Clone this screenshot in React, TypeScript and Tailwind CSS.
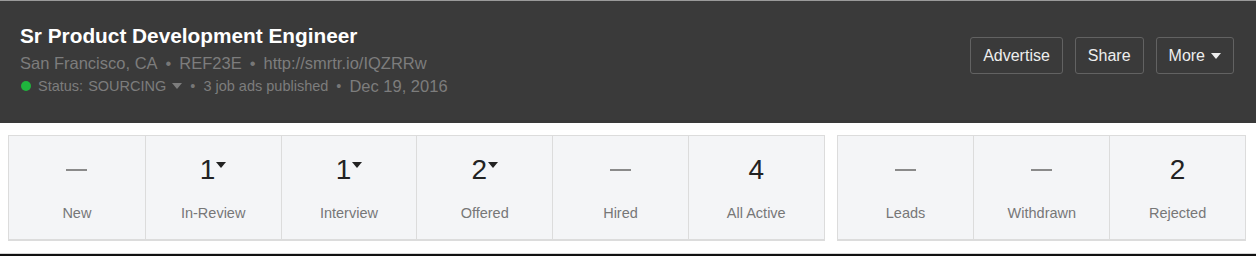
import React from 'react';

type Stat = { label: string; value?: string; caret?: boolean };

const pipeline: Stat[] = [
    { label: 'New' },
    { label: 'In-Review', value: '1', caret: true },
    { label: 'Interview', value: '1', caret: true },
    { label: 'Offered', value: '2', caret: true },
    { label: 'Hired' },
    { label: 'All Active', value: '4' },
];

const others: Stat[] = [
    { label: 'Leads' },
    { label: 'Withdrawn' },
    { label: 'Rejected', value: '2' },
];

const Caret: React.FC<{ className?: string }> = ({ className }) => (
    <svg width="10" height="6" viewBox="0 0 10 6" className={className}>
        <path d="M0 0h10L5 6z" fill="currentColor" />
    </svg>
);

const StatCell: React.FC<{ stat: Stat; first?: boolean }> = ({ stat, first }) => (
    <div className={`flex flex-col items-center pt-[20px] ${first ? '' : 'border-l border-[#dcdcdc]'}`}>
        <div className="h-[28px] flex items-center justify-center">
            {stat.value ? (
                <div className="flex items-start text-[#222] text-[28px] leading-[28px]">
                    <span>{stat.value}</span>
                    {stat.caret && <Caret className="mt-[6px] ml-[1px] text-[#222]" />}
                </div>
            ) : (
                <div className="w-[21px] h-[2px] bg-[#8a8a8a]" />
            )}
        </div>
        <div className="mt-[22px] text-[14.5px] text-[#777] leading-[14px]">{stat.label}</div>
    </div>
);

const Dot = () => <span className="mx-[8px] text-[#777]">•</span>;

export default function App() {
    return (
        <div className="w-[1256px] h-[256px] bg-white flex flex-col font-['Liberation_Sans',Arial,sans-serif]">
            <header className="h-[123px] bg-[#3a3a3a] border-t border-[#9a9a9a] flex justify-between pl-[20px] pr-[22px]">
                <div className="pt-[23px]">
                    <h1 className="text-white font-bold text-[20.8px] leading-[24px]">
                        Sr Product Development Engineer
                    </h1>
                    <div className="mt-[4px] text-[#7d7d7d] text-[16.5px] leading-[22px] flex items-center">
                        <span>San Francisco, CA</span>
                        <Dot />
                        <span>REF23E</span>
                        <Dot />
                        <span>http://smrtr.io/IQZRRw</span>
                    </div>
                    <div className="mt-[1px] flex items-center text-[#7d7d7d] text-[14.5px] leading-[22px]">
                        <span className="w-[10px] h-[10px] rounded-full bg-[#1fb53d] ml-[1px] mr-[7px]" />
                        <span>Status:</span>
                        <span className="ml-[5px]">SOURCING</span>
                        <Caret className="ml-[6px] text-[#7d7d7d]" />
                        <Dot />
                        <span>3 job ads published</span>
                        <Dot />
                        <span className="text-[16.5px]">Dec 19, 2016</span>
                    </div>
                </div>
                <div className="pt-[36px] flex items-start gap-[12px]">
                    <button className="h-[37px] px-[12px] rounded-[3px] border border-[#626262] text-[#eeeeee] text-[16px]">
                        Advertise
                    </button>
                    <button className="h-[37px] px-[12px] rounded-[3px] border border-[#626262] text-[#eeeeee] text-[16px]">
                        Share
                    </button>
                    <button className="h-[37px] pl-[12px] pr-[12px] rounded-[3px] border border-[#626262] text-[#eeeeee] text-[16px] flex items-center">
                        More
                        <Caret className="ml-[6px] text-[#eeeeee]" />
                    </button>
                </div>
            </header>
            <div className="flex gap-[12px] pl-[8px] pr-[10px] pt-[12px]">
                <div className="flex-[6] grid grid-cols-6 h-[106px] bg-[#f4f5f7] border border-b-2 border-[#dcdcdc]">
                    {pipeline.map((s, i) => (
                        <StatCell key={s.label} stat={s} first={i === 0} />
                    ))}
                </div>
                <div className="flex-[3] grid grid-cols-3 h-[106px] bg-[#f4f5f7] border border-b-2 border-[#dcdcdc]">
                    {others.map((s, i) => (
                        <StatCell key={s.label} stat={s} first={i === 0} />
                    ))}
                </div>
            </div>
            <div className="flex-1" />
            <div className="h-[1px] bg-[#d6d6d6]" />
            <div className="h-[2px] bg-[#111]" />
        </div>
    );
}
